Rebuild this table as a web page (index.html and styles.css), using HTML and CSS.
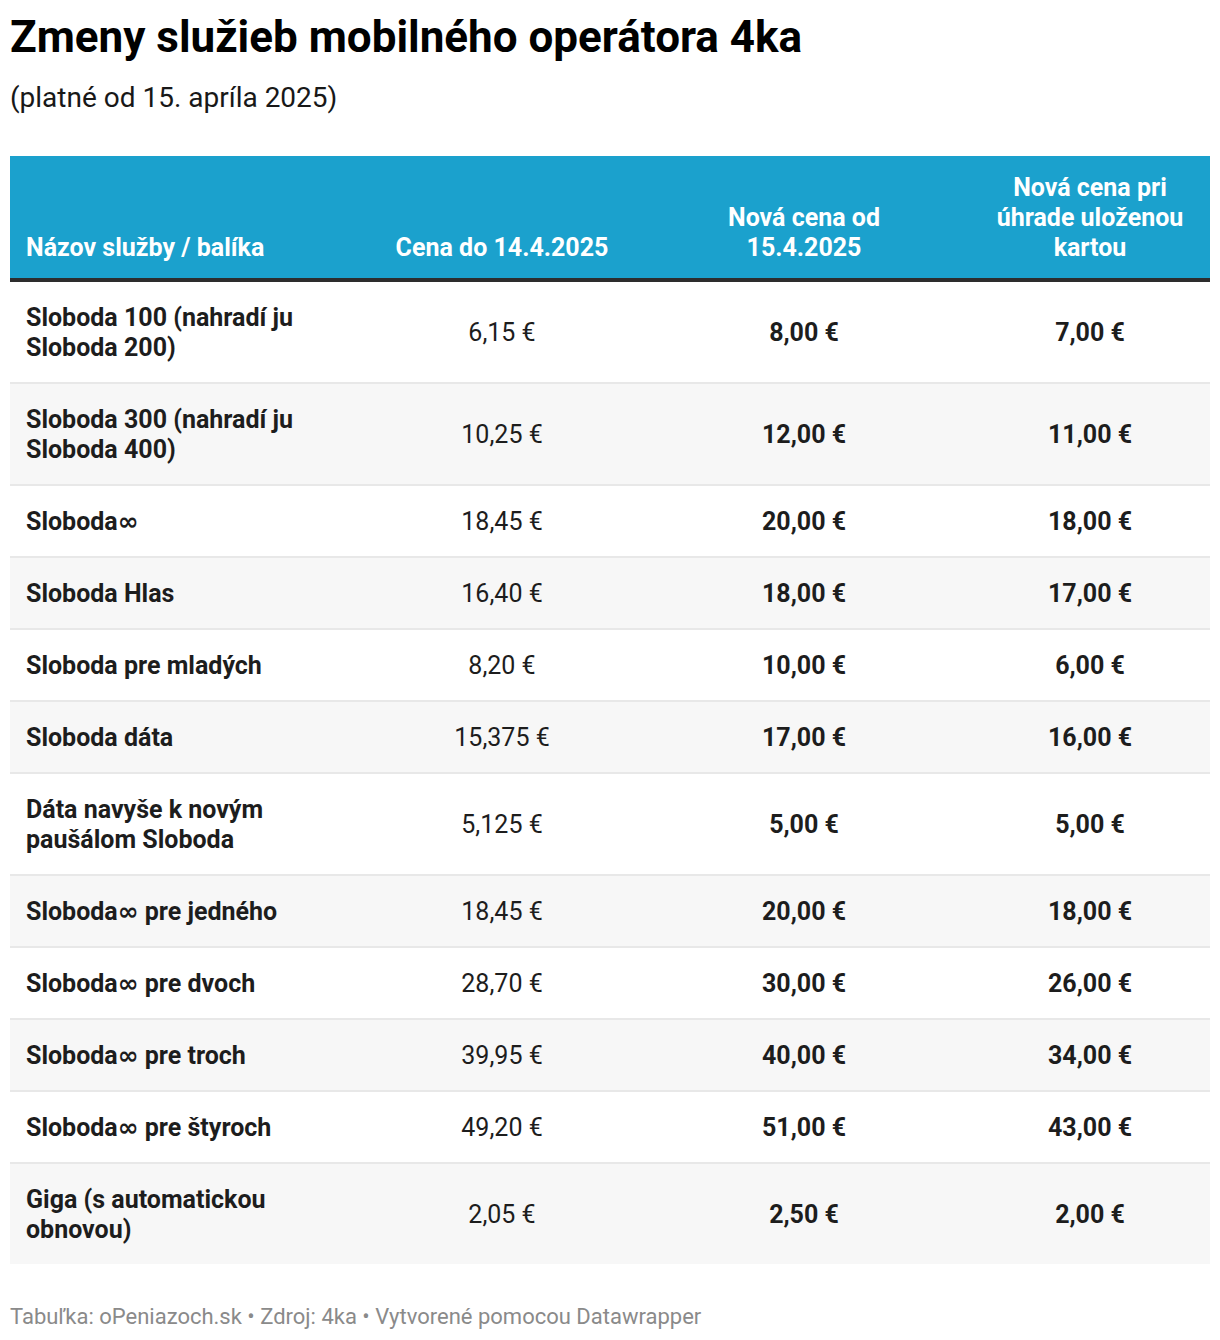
FILE: index.html
```html
<!DOCTYPE html>
<html lang="sk">
<head>
<meta charset="utf-8">
<title>Zmeny služieb mobilného operátora 4ka</title>
<link rel="stylesheet" href="styles.css">
</head>
<body>
<div class="chart">
  <h1 class="title">Zmeny služieb mobilného operátora 4ka</h1>
  <p class="subtitle">(platné od 15. apríla 2025)</p>
  <table class="table">
    <colgroup>
      <col class="c1"><col class="c2"><col class="c3"><col class="c4">
    </colgroup>
    <thead>
      <tr>
        <th class="left">Názov služby / balíka</th>
        <th>Cena do 14.4.2025</th>
        <th><span class="wrap">Nová cena od 15.4.2025</span></th>
        <th><span class="wrap">Nová cena pri úhrade uloženou kartou</span></th>
      </tr>
    </thead>
    <tbody>
      <tr><td class="name">Sloboda 100 (nahradí ju Sloboda 200)</td><td>6,15 €</td><td class="b">8,00 €</td><td class="b">7,00 €</td></tr>
      <tr><td class="name">Sloboda 300 (nahradí ju Sloboda 400)</td><td>10,25 €</td><td class="b">12,00 €</td><td class="b">11,00 €</td></tr>
      <tr><td class="name">Sloboda<span class="inf">∞</span></td><td>18,45 €</td><td class="b">20,00 €</td><td class="b">18,00 €</td></tr>
      <tr><td class="name">Sloboda Hlas</td><td>16,40 €</td><td class="b">18,00 €</td><td class="b">17,00 €</td></tr>
      <tr><td class="name">Sloboda pre mladých</td><td>8,20 €</td><td class="b">10,00 €</td><td class="b">6,00 €</td></tr>
      <tr><td class="name">Sloboda dáta</td><td>15,375 €</td><td class="b">17,00 €</td><td class="b">16,00 €</td></tr>
      <tr><td class="name">Dáta navyše k novým paušálom Sloboda</td><td>5,125 €</td><td class="b">5,00 €</td><td class="b">5,00 €</td></tr>
      <tr><td class="name">Sloboda<span class="inf">∞</span> pre jedného</td><td>18,45 €</td><td class="b">20,00 €</td><td class="b">18,00 €</td></tr>
      <tr><td class="name">Sloboda<span class="inf">∞</span> pre dvoch</td><td>28,70 €</td><td class="b">30,00 €</td><td class="b">26,00 €</td></tr>
      <tr><td class="name">Sloboda<span class="inf">∞</span> pre troch</td><td>39,95 €</td><td class="b">40,00 €</td><td class="b">34,00 €</td></tr>
      <tr><td class="name">Sloboda<span class="inf">∞</span> pre štyroch</td><td>49,20 €</td><td class="b">51,00 €</td><td class="b">43,00 €</td></tr>
      <tr><td class="name">Giga (s automatickou obnovou)</td><td>2,05 €</td><td class="b">2,50 €</td><td class="b">2,00 €</td></tr>
    </tbody>
  </table>
  <p class="footer">Tabuľka: oPeniazoch.sk • Zdroj: 4ka • Vytvorené pomocou Datawrapper</p>
</div>
</body>
</html>
```
FILE: styles.css
```css
html, body {
  margin: 0;
  padding: 0;
  background: #ffffff;
}
.chart {
  font-family: Roboto, "Liberation Sans", sans-serif;
  color: #1d1d1d;
  padding: 11px 10px 0 10px;
  width: 1200px;
}
.title {
  margin: 0;
  font-size: 44px;
  line-height: 52px;
  font-weight: 700;
  color: #000;
}
.subtitle {
  margin: 18px 0 0 0;
  font-size: 28px;
  line-height: 34px;
  color: #181818;
}
.table {
  margin-top: 41px;
  width: 1200px;
  border-collapse: collapse;
  table-layout: fixed;
}
.c1 { width: 356px; }
.c2 { width: 272px; }
.c3 { width: 332px; }
.c4 { width: 240px; }
.table th {
  background: #1ba1cd;
  color: #ffffff;
  font-size: 25px;
  line-height: 30px;
  font-weight: 700;
  text-align: center;
  vertical-align: bottom;
  padding: 17px 16px 15px 16px;
  border-bottom: 4px solid #2d2d2d;
}
.table th.left { text-align: left; }
.wrap {
  display: inline-block;
  max-width: 215px;
}
.table td {
  font-size: 25px;
  line-height: 30px;
  height: 30px;
  padding: 21px 16px 19px 16px;
  text-align: center;
  vertical-align: middle;
  border-bottom: 2px solid #e8e8e8;
  color: #1d1d1d;
}
.table tbody tr:nth-child(even) td { background: #f7f7f7; }
.table tbody tr:last-child td { border-bottom: none; }
.table td.name {
  text-align: left;
  font-weight: 700;
}
.inf {
  font-family: "DejaVu Sans", sans-serif;
  font-weight: 700;
  font-size: 25px;
  line-height: 1;
}
.table td.b { font-weight: 700; }
.footer {
  margin: 40px 0 0 0;
  font-size: 22px;
  line-height: 26px;
  color: #8a8a8a;
}
```
